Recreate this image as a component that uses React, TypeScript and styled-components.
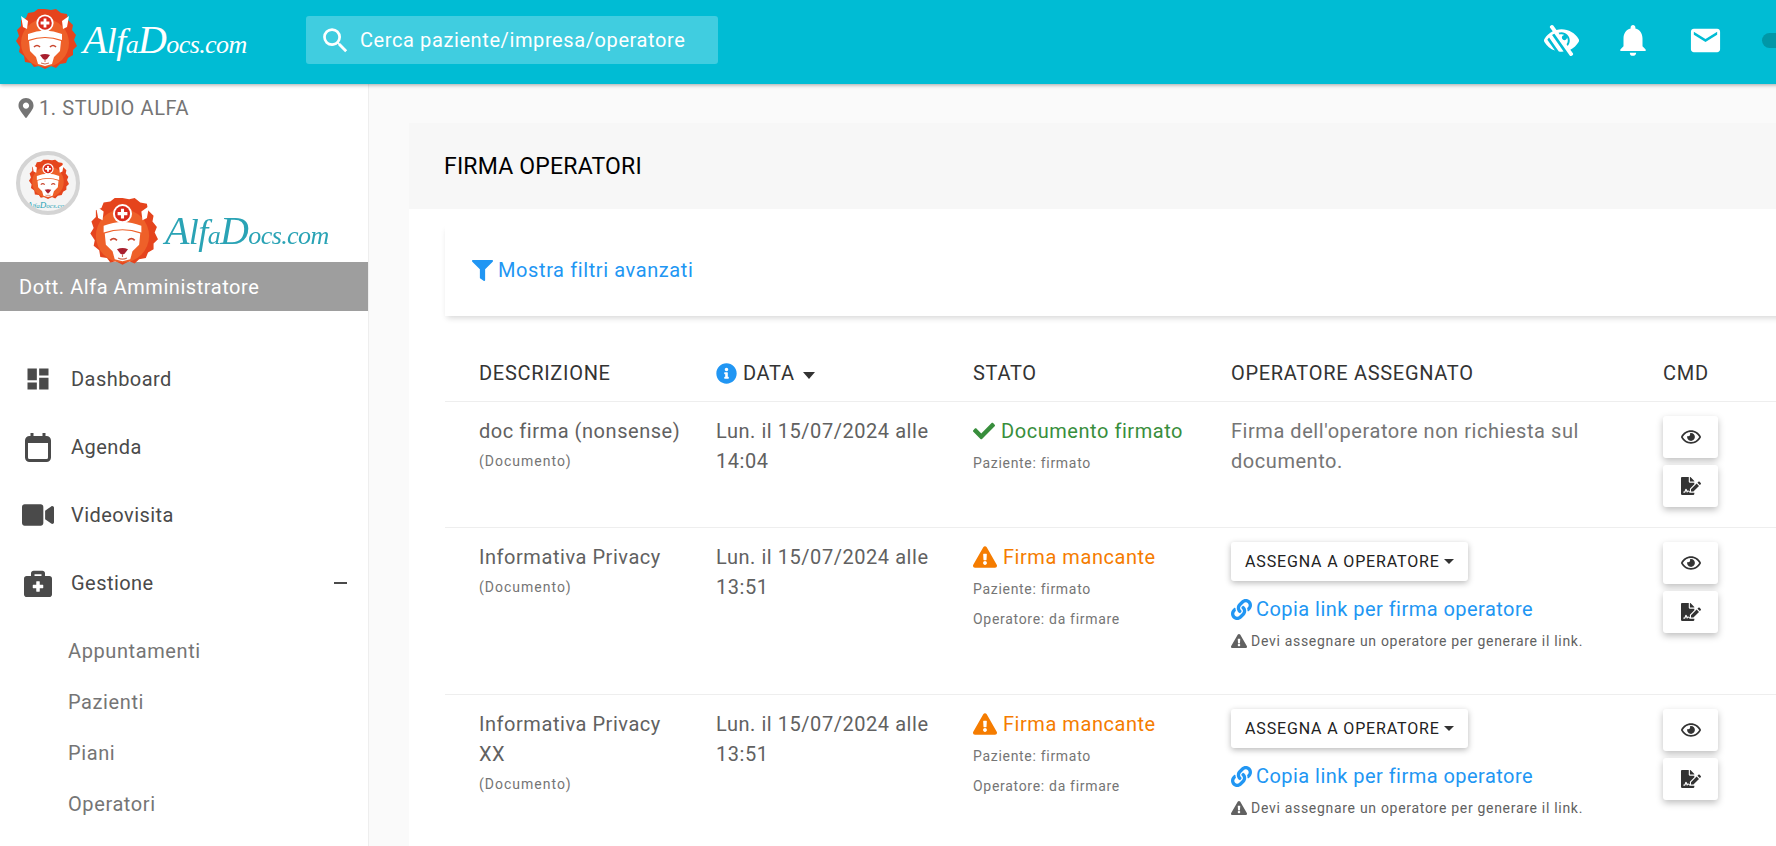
import styled, { createGlobalStyle } from "styled-components";
import {
  FaBriefcaseMedical,
  FaCheck,
  FaExclamationTriangle,
  FaFileSignature,
  FaFilter,
  FaInfoCircle,
  FaLink,
  FaLowVision,
  FaMapMarkerAlt,
  FaRegEye,
  FaVideo,
} from "react-icons/fa";
import { MdDashboard, MdEmail, MdNotifications, MdSearch } from "react-icons/md";

const GlobalStyle = createGlobalStyle`
  html, body {
    margin: 0;
    height: 846px;
    overflow: hidden;
    background: #fafafa;
  }
  body {
    font-family: Roboto, "Liberation Sans", sans-serif;
    font-size: 20px;
    color: #616161;
  }
`;

interface LionProps {
  size: number;
}

function Lion({ size }: LionProps) {
  return (
    <svg width={size} height={size} viewBox="0 0 64 64" style={{ flexShrink: 0 }}>
      <path
        fill="#e5441d"
        d="M32 1l6 1 5-1 5 4 6 1 1 6 5 5-1 5 4 5-2 5 3 6-4 4 0 5-5 3-2 5-6 1-4 4-5-2-6 3-6-3-5 1-3-4-6-1-1-6-5-4 1-5-4-6 3-5-2-6 4-4 0-6 5-2 2-5 6-1 4-3z"
      />
      <circle cx="32" cy="35" r="24" fill="#ee6029" />
      <path fill="#fff" d="M8 8l7 5-1 8-4-2z" />
      <path fill="#fff" d="M56 8l-7 5 1 8 4-2z" />
      <path fill="#fff" d="M15 26q17-7 34 0l0 6q-17-6-34 0z" />
      <path fill="#fff" d="M16 33q16-6 32 0l-1 10-6 6-2 7-7 2-7-2-2-7-6-6z" />
      <circle cx="32" cy="15" r="8.600" fill="#fff" />
      <circle cx="32" cy="15" r="6.800" fill="#d9291c" />
      <path fill="#fff" d="M30.600 10.600h2.800v3h3v2.800h-3v3h-2.800v-3h-3v-2.800h3z" />
      <path d="M21 39q3-3 6 0M37 39q3-3 6 0" fill="none" stroke="#c9462f" strokeWidth="1.600" />
      <path fill="#a81f2e" d="M27 47q5-2 10 0l-3 4-2 1-2-1z" />
      <path d="M32 52v2M28 55q4 2 8 0" fill="none" stroke="#d06a50" strokeWidth="1" />
    </svg>
  );
}

function Wordmark({ className }: { className?: string }) {
  return (
    <span className={className}>
      <b>A</b>
      <i>lf</i>a<b>D</b>ocs.com
    </span>
  );
}

const Page = styled.div`
  width: 1900px;
  height: 846px;
  overflow: hidden;
  display: flex;
  flex-direction: column;
`;

const Header = styled.header`
  height: 84px;
  flex-shrink: 0;
  box-sizing: border-box;
  padding-bottom: 4px;
  background: #00bcd4;
  box-shadow: 0 1px 4px rgba(0, 0, 0, 0.35);
  display: flex;
  align-items: center;
  position: relative;
  z-index: 2;
`;

const Brand = styled.div`
  width: 306px;
  padding: 0 0 0 13px;
  box-sizing: border-box;
  display: flex;
  align-items: center;
  gap: 6px;
`;

const BrandMark = styled(Wordmark)`
  font-family: "Liberation Serif", serif;
  font-style: italic;
  font-size: 26px;
  letter-spacing: -0.6px;
  line-height: 1;
  color: #fff;
  white-space: nowrap;

  b {
    font-weight: 400;
    font-size: 40px;
  }
  i {
    font-size: 36px;
  }
`;

const SearchBox = styled.div`
  width: 412px;
  height: 48px;
  background: #40cde0;
  border-radius: 3px;
  display: flex;
  align-items: center;
  padding-left: 13px;
  box-sizing: border-box;
  color: #fff;
  gap: 8px;
`;

const SearchText = styled.span`
  letter-spacing: 0.6px;
`;

const TopIcons = styled.div`
  margin-left: 826px;
  display: flex;
  align-items: center;
  color: #fff;
`;

const TopIcon = styled.span<{ $width: number }>`
  width: ${(p) => p.$width}px;
  display: flex;
  align-items: center;
`;

const TogglePill = styled.span`
  width: 40px;
  height: 15px;
  border-radius: 8px;
  background: #0097a7;
`;

const Body = styled.div`
  flex: 1;
  display: flex;
  min-height: 0;
`;

const Sidebar = styled.aside`
  width: 369px;
  flex-shrink: 0;
  box-sizing: border-box;
  background: #fff;
  border-right: 1px solid #eeeeee;
`;

const Location = styled.div`
  height: 48px;
  display: flex;
  align-items: center;
  padding-left: 16px;
  gap: 3px;
  color: #757575;
  letter-spacing: 0.6px;
`;

const Profile = styled.div`
  position: relative;
  height: 130px;
  padding: 19px 0 0 16px;
  box-sizing: border-box;
`;

const Avatar = styled.div`
  width: 64px;
  height: 64px;
  box-sizing: border-box;
  border: 4px solid #d4d4d4;
  border-radius: 50%;
  background: #f4f4f4;
  overflow: hidden;
  display: flex;
  flex-direction: column;
  align-items: center;
  padding-top: 4px;
`;

const AvatarMark = styled(Wordmark)`
  font-family: "Liberation Serif", serif;
  font-style: italic;
  font-size: 7px;
  line-height: 9px;
  color: #2aa3b5;
  white-space: nowrap;

  b {
    font-weight: 400;
    font-size: 9px;
  }
`;

const ProfileLogo = styled.div`
  position: absolute;
  left: 87px;
  top: 65px;
  display: flex;
  align-items: center;
  gap: 7px;
  filter: blur(0.4px);
  z-index: 1;
`;

const ProfileMark = styled(BrandMark)`
  color: #2aa3b5;
  margin-top: -4px;
`;

const NameBar = styled.div`
  height: 49px;
  background: #9e9e9e;
  color: #fff;
  display: flex;
  align-items: center;
  padding-left: 19px;
  letter-spacing: 0.55px;
`;

const Menu = styled.nav`
  padding-top: 38px;
`;

const MenuItem = styled.div`
  height: 60px;
  margin-bottom: 8px;
  display: flex;
  align-items: center;
  color: #4a4a4a;
  letter-spacing: 0.45px;
  padding-right: 21px;
`;

const MenuIcon = styled.span`
  width: 71px;
  display: flex;
  justify-content: center;
  padding-left: 4px;
  box-sizing: border-box;
  color: #4a4a4a;
`;

const Minus = styled.span`
  margin-left: auto;
  width: 13px;
  height: 2px;
  background: #4a4a4a;
`;

const SubMenu = styled.div`
  padding-top: 4px;
`;

const SubItem = styled.div`
  height: 51px;
  display: flex;
  align-items: center;
  padding-left: 68px;
  color: #757575;
  letter-spacing: 0.6px;
`;

const Main = styled.main`
  flex: 1;
  padding: 39px 0 0 40px;
  min-width: 0;
`;

const Card = styled.section`
  background: #fff;
  width: 1480px;
  height: 800px;
`;

const CardHeader = styled.div`
  height: 86px;
  background: #f7f7f7;
  color: #000;
  display: flex;
  align-items: center;
  padding-left: 35px;
  font-size: 23px;
  letter-spacing: 0.2px;
`;

const CardBody = styled.div`
  padding: 15px 0 0 36px;
`;

const FilterBox = styled.div`
  height: 92px;
  display: flex;
  align-items: center;
  gap: 5px;
  padding-left: 27px;
  color: #2196f3;
  letter-spacing: 0.6px;
  box-shadow: 0 4px 6px -2px rgba(0, 0, 0, 0.16);
`;

const columns = "237px 257px 258px 432px 1fr";

const TableHead = styled.div`
  display: grid;
  grid-template-columns: ${columns};
  height: 86px;
  padding: 30px 0 0 34px;
  box-sizing: border-box;
  color: #333;
  letter-spacing: 0.7px;
  line-height: 55px;
  border-bottom: 1px solid #eeeeee;
`;

const HeadCell = styled.div`
  display: flex;
  align-items: center;
  height: 55px;
  gap: 6px;
`;

const SortCaret = styled.span`
  width: 0;
  height: 0;
  border: 6px solid transparent;
  border-top: 7px solid #333;
  border-bottom: 0;
  margin: 4px 0 0 2px;
`;

const Row = styled.div<{ $height: number }>`
  display: grid;
  grid-template-columns: ${columns};
  height: ${(p) => p.$height}px;
  padding: 14px 0 0 34px;
  box-sizing: border-box;
  line-height: 30px;
  border-bottom: 1px solid #eeeeee;
  letter-spacing: 0.55px;
`;

const Cell = styled.div<{ $gutter?: number; $muted?: boolean }>`
  padding-right: ${(p) => p.$gutter ?? 12}px;
  min-width: 0;
  color: ${(p) => (p.$muted ? "#757575" : "inherit")};
`;

const Small = styled.div`
  font-size: 14px;
  letter-spacing: 0.7px;
  color: #757575;
`;

const TypeLabel = styled(Small)`
  letter-spacing: 1px;
`;

const Status = styled.div<{ $color: string }>`
  color: ${(p) => p.$color};
  display: flex;
  align-items: center;
  gap: 6px;
  margin-bottom: 2px;
`;

const AssignButton = styled.button`
  display: flex;
  align-items: center;
  gap: 4px;
  height: 39px;
  width: 237px;
  padding: 0 0 0 14px;
  box-sizing: border-box;
  background: #fff;
  border: 0;
  border-radius: 3px;
  box-shadow: 0 2px 6px rgba(0, 0, 0, 0.28);
  font-family: inherit;
  font-size: 16px;
  letter-spacing: 0.85px;
  color: #222;
  margin-bottom: 13px;
`;

const ButtonCaret = styled.span`
  width: 0;
  height: 0;
  border: 5px solid transparent;
  border-top: 5px solid #333;
  border-bottom: 0;
`;

const CopyLink = styled.a`
  display: flex;
  align-items: center;
  gap: 4px;
  color: #2196f3;
  letter-spacing: 0.46px;
`;

const Hint = styled(Small)`
  display: flex;
  align-items: center;
  gap: 4px;
  color: #616161;
  margin-top: 2px;
`;

const CmdCell = styled.div`
  display: flex;
  flex-direction: column;
  gap: 7px;
`;

const CmdButton = styled.button`
  width: 55px;
  height: 42px;
  display: flex;
  align-items: center;
  justify-content: center;
  background: #fff;
  border: 0;
  border-radius: 3px;
  color: #333;
  box-shadow: 0 3px 7px rgba(0, 0, 0, 0.25);
  padding: 0;
`;

const ORANGE = "#f57c00";
const GREEN = "#388e3c";

interface PendingRowProps {
  title: string;
  height: number;
}

function CmdButtons() {
  return (
    <CmdCell>
      <CmdButton>
        <FaRegEye size={20} />
      </CmdButton>
      <CmdButton>
        <FaFileSignature size={20} />
      </CmdButton>
    </CmdCell>
  );
}

function PendingRow({ title, height }: PendingRowProps) {
  return (
    <Row $height={height}>
      <Cell $gutter={30}>
        {title}
        <TypeLabel>(Documento)</TypeLabel>
      </Cell>
      <Cell>Lun. il 15/07/2024 alle 13:51</Cell>
      <Cell>
        <Status $color={ORANGE}>
          <FaExclamationTriangle size={24} />
          Firma mancante
        </Status>
        <Small>Paziente: firmato</Small>
        <Small>Operatore: da firmare</Small>
      </Cell>
      <Cell>
        <AssignButton>
          ASSEGNA A OPERATORE
          <ButtonCaret />
        </AssignButton>
        <CopyLink>
          <FaLink size={21} />
          Copia link per firma operatore
        </CopyLink>
        <Hint>
          <FaExclamationTriangle size={16} />
          Devi assegnare un operatore per generare il link.
        </Hint>
      </Cell>
      <CmdButtons />
    </Row>
  );
}

export default function App() {
  return (
    <Page>
      <GlobalStyle />
      <Header>
        <Brand>
          <Lion size={64} />
          <BrandMark />
        </Brand>
        <SearchBox>
          <MdSearch size={33} />
          <SearchText>Cerca paziente/impresa/operatore</SearchText>
        </SearchBox>
        <TopIcons>
          <TopIcon $width={70}>
            <FaLowVision size={35} />
          </TopIcon>
          <TopIcon $width={74}>
            <MdNotifications size={38} />
          </TopIcon>
          <TopIcon $width={74}>
            <MdEmail size={35} />
          </TopIcon>
          <TogglePill />
        </TopIcons>
      </Header>
      <Body>
        <Sidebar>
          <Location>
            <FaMapMarkerAlt size={20} />
            1. STUDIO ALFA
          </Location>
          <Profile>
            <Avatar>
              <Lion size={42} />
              <AvatarMark />
            </Avatar>
            <ProfileLogo>
              <Lion size={71} />
              <ProfileMark />
            </ProfileLogo>
          </Profile>
          <NameBar>Dott. Alfa Amministratore</NameBar>
          <Menu>
            <MenuItem>
              <MenuIcon>
                <MdDashboard size={28} />
              </MenuIcon>
              Dashboard
            </MenuItem>
            <MenuItem>
              <MenuIcon>
                <svg width="26" height="29" viewBox="0 0 26 29">
                  <rect x="1.500" y="4.500" width="23" height="23" rx="3" fill="none" stroke="currentColor" strokeWidth="3" />
                  <path d="M1.500 8h23" stroke="currentColor" strokeWidth="4" />
                  <path d="M7 0v5M19 0v5" stroke="currentColor" strokeWidth="3" />
                </svg>
              </MenuIcon>
              Agenda
            </MenuItem>
            <MenuItem>
              <MenuIcon>
                <FaVideo size={32} />
              </MenuIcon>
              Videovisita
            </MenuItem>
            <MenuItem>
              <MenuIcon>
                <FaBriefcaseMedical size={28} />
              </MenuIcon>
              Gestione
              <Minus />
            </MenuItem>
            <SubMenu>
              <SubItem>Appuntamenti</SubItem>
              <SubItem>Pazienti</SubItem>
              <SubItem>Piani</SubItem>
              <SubItem>Operatori</SubItem>
            </SubMenu>
          </Menu>
        </Sidebar>
        <Main>
          <Card>
            <CardHeader>FIRMA OPERATORI</CardHeader>
            <CardBody>
              <FilterBox>
                <FaFilter size={21} />
                Mostra filtri avanzati
              </FilterBox>
              <TableHead>
                <HeadCell>DESCRIZIONE</HeadCell>
                <HeadCell>
                  <FaInfoCircle size={21} color="#2196f3" />
                  DATA
                  <SortCaret />
                </HeadCell>
                <HeadCell>STATO</HeadCell>
                <HeadCell>OPERATORE ASSEGNATO</HeadCell>
                <HeadCell>CMD</HeadCell>
              </TableHead>
              <Row $height={126}>
                <Cell $gutter={30}>
                  doc firma (nonsense)
                  <TypeLabel>(Documento)</TypeLabel>
                </Cell>
                <Cell>Lun. il 15/07/2024 alle 14:04</Cell>
                <Cell>
                  <Status $color={GREEN}>
                    <FaCheck size={22} />
                    Documento firmato
                  </Status>
                  <Small>Paziente: firmato</Small>
                </Cell>
                <Cell $muted>Firma dell'operatore non richiesta sul documento.</Cell>
                <CmdButtons />
              </Row>
              <PendingRow title="Informativa Privacy" height={167} />
              <PendingRow title="Informativa Privacy XX" height={168} />
            </CardBody>
          </Card>
        </Main>
      </Body>
    </Page>
  );
}
